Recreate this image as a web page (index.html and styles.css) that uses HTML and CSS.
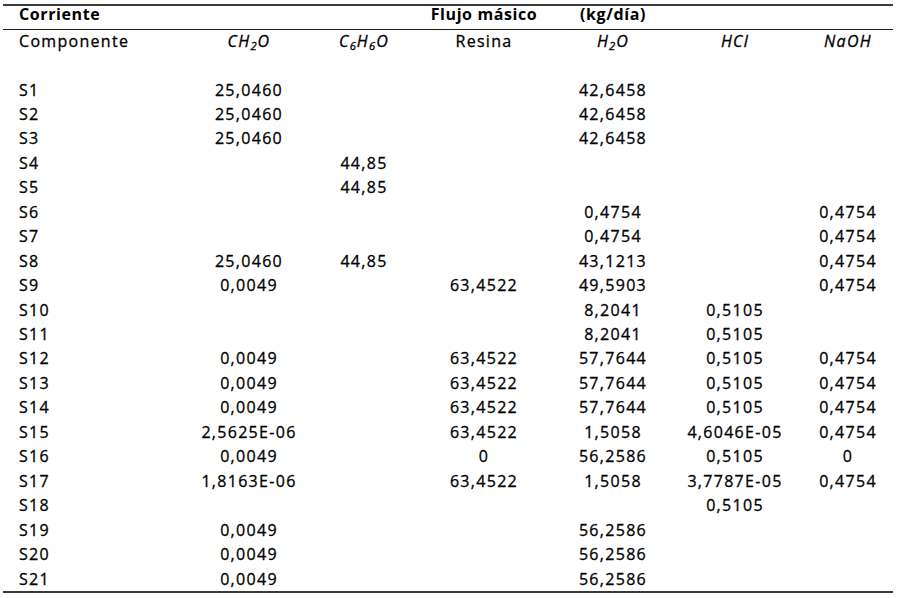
FILE: index.html
```html
<!DOCTYPE html>
<html lang="es">
<head>
<meta charset="utf-8">
<title>Flujo másico</title>
<link rel="stylesheet" href="styles.css">
</head>
<body>
<div class="sheet">
<table class="flow">
  <colgroup>
    <col class="c-name"><col class="c-ch2o"><col class="c-c6h6o"><col class="c-resina"><col class="c-h2o"><col class="c-hcl"><col class="c-naoh">
  </colgroup>
  <thead>
    <tr class="row-title">
      <th class="first">Corriente</th><th></th><th></th><th>Flujo másico</th><th>(kg/día)</th><th></th><th></th>
    </tr>
    <tr class="row-head">
      <td class="first">Componente</td>
      <td><i>CH<sub>2</sub>O</i></td>
      <td><i>C<sub>6</sub>H<sub>6</sub>O</i></td>
      <td>Resina</td>
      <td><i>H<sub>2</sub>O</i></td>
      <td><i>HCl</i></td>
      <td><i>NaOH</i></td>
    </tr>
  </thead>
  <tbody>
    <tr class="row-gap"><td class="first"></td><td></td><td></td><td></td><td></td><td></td><td></td></tr>
    <tr><td class="first">S1</td><td>25,0460</td><td></td><td></td><td>42,6458</td><td></td><td></td></tr>
    <tr><td class="first">S2</td><td>25,0460</td><td></td><td></td><td>42,6458</td><td></td><td></td></tr>
    <tr><td class="first">S3</td><td>25,0460</td><td></td><td></td><td>42,6458</td><td></td><td></td></tr>
    <tr><td class="first">S4</td><td></td><td>44,85</td><td></td><td></td><td></td><td></td></tr>
    <tr><td class="first">S5</td><td></td><td>44,85</td><td></td><td></td><td></td><td></td></tr>
    <tr><td class="first">S6</td><td></td><td></td><td></td><td>0,4754</td><td></td><td>0,4754</td></tr>
    <tr><td class="first">S7</td><td></td><td></td><td></td><td>0,4754</td><td></td><td>0,4754</td></tr>
    <tr><td class="first">S8</td><td>25,0460</td><td>44,85</td><td></td><td>43,1213</td><td></td><td>0,4754</td></tr>
    <tr><td class="first">S9</td><td>0,0049</td><td></td><td>63,4522</td><td>49,5903</td><td></td><td>0,4754</td></tr>
    <tr><td class="first">S10</td><td></td><td></td><td></td><td>8,2041</td><td>0,5105</td><td></td></tr>
    <tr><td class="first">S11</td><td></td><td></td><td></td><td>8,2041</td><td>0,5105</td><td></td></tr>
    <tr><td class="first">S12</td><td>0,0049</td><td></td><td>63,4522</td><td>57,7644</td><td>0,5105</td><td>0,4754</td></tr>
    <tr><td class="first">S13</td><td>0,0049</td><td></td><td>63,4522</td><td>57,7644</td><td>0,5105</td><td>0,4754</td></tr>
    <tr><td class="first">S14</td><td>0,0049</td><td></td><td>63,4522</td><td>57,7644</td><td>0,5105</td><td>0,4754</td></tr>
    <tr><td class="first">S15</td><td>2,5625E-06</td><td></td><td>63,4522</td><td>1,5058</td><td>4,6046E-05</td><td>0,4754</td></tr>
    <tr><td class="first">S16</td><td>0,0049</td><td></td><td>0</td><td>56,2586</td><td>0,5105</td><td>0</td></tr>
    <tr><td class="first">S17</td><td>1,8163E-06</td><td></td><td>63,4522</td><td>1,5058</td><td>3,7787E-05</td><td>0,4754</td></tr>
    <tr><td class="first">S18</td><td></td><td></td><td></td><td></td><td>0,5105</td><td></td></tr>
    <tr><td class="first">S19</td><td>0,0049</td><td></td><td></td><td>56,2586</td><td></td><td></td></tr>
    <tr><td class="first">S20</td><td>0,0049</td><td></td><td></td><td>56,2586</td><td></td><td></td></tr>
    <tr><td class="first">S21</td><td>0,0049</td><td></td><td></td><td>56,2586</td><td></td><td></td></tr>
  </tbody>
</table>
</div>
</body>
</html>
```

FILE: styles.css
```css
html, body {
  margin: 0;
  padding: 0;
  background: #ffffff;
}

.sheet {
  padding: 4px 5px 0 3px;
}

.flow {
  width: 890px;
  table-layout: fixed;
  border-collapse: collapse;
  font-family: "Open Sans", "Liberation Sans", Arial, sans-serif;
  font-size: 16px;
  font-weight: 500;
  letter-spacing: 1.3px;
  color: #000000;
  -webkit-text-stroke: 0.3px #000000;
  border-top: 2px solid #3a3a3a;
  border-bottom: 2px solid #3a3a3a;
}

.c-name { width: 176px; }
.c-ch2o { width: 140px; }
.c-c6h6o { width: 90px; }
.c-resina { width: 150px; }
.c-h2o { width: 108px; }
.c-hcl { width: 136px; }
.c-naoh { width: 90px; }

.flow th,
.flow td {
  padding: 0;
  text-align: center;
  white-space: nowrap;
  line-height: 24.45px;
  height: 24.45px;
  vertical-align: top;
}

.flow .first {
  text-align: left;
  padding-left: 16px;
}

.flow th {
  font-weight: bold;
  letter-spacing: 0.6px;
  -webkit-text-stroke: 0;
}

.row-title th {
  line-height: 17px;
  height: 17px;
  padding-bottom: 6px;
  border-bottom: 1px solid #222222;
}

.row-head td {
  line-height: 22px;
  height: 22px;
}

.row-gap td {
  height: 25.5px;
}

.flow i {
  font-style: italic;
}

.flow sub {
  font-size: 70%;
  line-height: 0;
  vertical-align: -3px;
  letter-spacing: 1px;
}
```
